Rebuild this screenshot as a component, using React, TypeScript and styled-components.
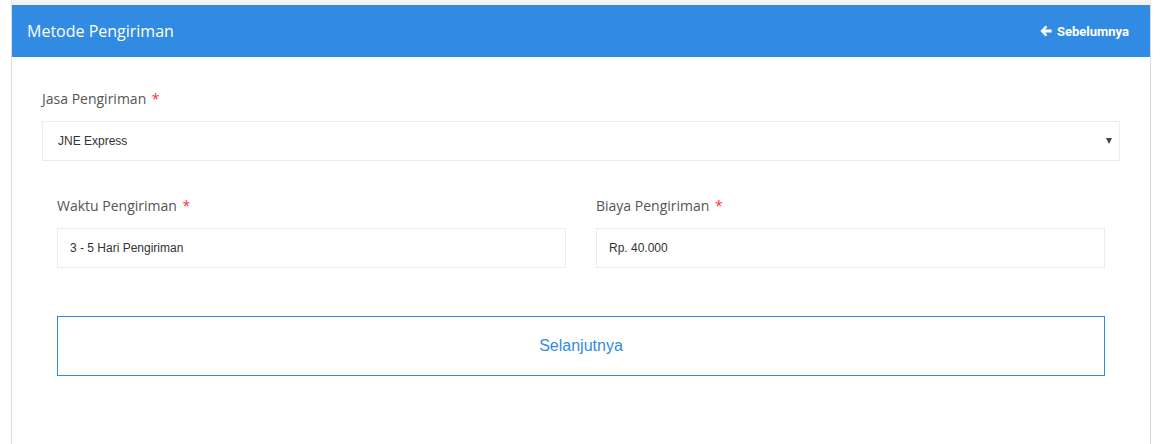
import React from "react";
import styled, { createGlobalStyle } from "styled-components";

const Global = createGlobalStyle`
  html, body { margin: 0; padding: 0; background: #fff; }
  * { box-sizing: border-box; }
`;

const Page = styled.div`
  padding: 0 19px 0 11px;
`;

const Card = styled.div`
  border-left: 1px solid #dcdcdc;
  border-right: 1px solid #dcdcdc;
  border-top: 5px solid #f3f3f3;
  min-height: 444px;
  background: #fff;
`;

const Header = styled.div`
  height: 52px;
  background: #328be2;
  display: flex;
  align-items: center;
  justify-content: space-between;
  padding: 0 21px 0 15px;
`;

const Title = styled.h1`
  margin: 0;
  font-family: "Open Sans", sans-serif;
  font-weight: 400;
  font-size: 16px;
  color: #fff;
`;

const BackLink = styled.a`
  display: flex;
  align-items: center;
  gap: 5px;
  font-family: Roboto, "Liberation Sans", sans-serif;
  font-weight: 700;
  font-size: 13px;
  color: #fff;
  text-decoration: none;
`;

const Body = styled.div`
  padding: 30px 30px 0 30px;
`;

const Label = styled.label`
  display: block;
  font-family: "Open Sans", sans-serif;
  font-size: 14px;
  color: #555;
  margin-bottom: 10px;
  line-height: 24px;
`;

const Req = styled.span`
  color: #f33;
  margin-left: 2px;
`;

const Field = styled.div<{ $pad?: boolean }>`
  padding: 0 ${(p) => (p.$pad ? "15px" : "0")};
  flex: 1;
`;

const SelectBox = styled.div`
  position: relative;
  height: 40px;
  border: 1px solid #ececec;
  display: flex;
  align-items: center;
  padding-left: 15px;
  font-family: "Liberation Sans", Arial, sans-serif;
  font-size: 12px;
  color: #333;
`;

const Caret = styled.span`
  position: absolute;
  right: 7px;
  top: 16px;
  width: 0;
  height: 0;
  border-left: 3px solid transparent;
  border-right: 3px solid transparent;
  border-top: 6px solid #444;
`;

const Input = styled.div`
  height: 40px;
  border: 1px solid #ececec;
  display: flex;
  align-items: center;
  padding-left: 12px;
  font-family: "Liberation Sans", Arial, sans-serif;
  font-size: 12px;
  color: #333;
`;

const Row = styled.div`
  display: flex;
  margin-top: 33px;
`;

const ButtonWrap = styled.div`
  padding: 48px 15px 0;
`;

const Button = styled.button`
  width: 100%;
  height: 60px;
  background: #fff;
  border: 1px solid #328be2;
  color: #328be2;
  font-family: "Liberation Sans", Arial, sans-serif;
  font-size: 16px;
  cursor: pointer;
`;

const ArrowIcon = () => (
  <svg width="12" height="12" viewBox="0 0 12 12" aria-hidden>
    <path d="M5.6 0.6 L0.4 6 L5.6 11.4 L7.3 9.7 L5.1 7.4 H11.6 V4.6 H5.1 L7.3 2.3 Z" fill="#fff" />
  </svg>
);

export default function App() {
  return (
    <>
      <Global />
      <Page>
        <Card>
          <Header>
            <Title>Metode Pengiriman</Title>
            <BackLink href="#">
              <ArrowIcon />
              Sebelumnya
            </BackLink>
          </Header>
          <Body>
            <Label>
              Jasa Pengiriman <Req>*</Req>
            </Label>
            <SelectBox>
              JNE Express
              <Caret />
            </SelectBox>
            <Row>
              <Field $pad>
                <Label>
                  Waktu Pengiriman <Req>*</Req>
                </Label>
                <Input>3 - 5 Hari Pengiriman</Input>
              </Field>
              <Field $pad>
                <Label>
                  Biaya Pengiriman <Req>*</Req>
                </Label>
                <Input>Rp. 40.000</Input>
              </Field>
            </Row>
            <ButtonWrap>
              <Button>Selanjutnya</Button>
            </ButtonWrap>
          </Body>
        </Card>
      </Page>
    </>
  );
}
